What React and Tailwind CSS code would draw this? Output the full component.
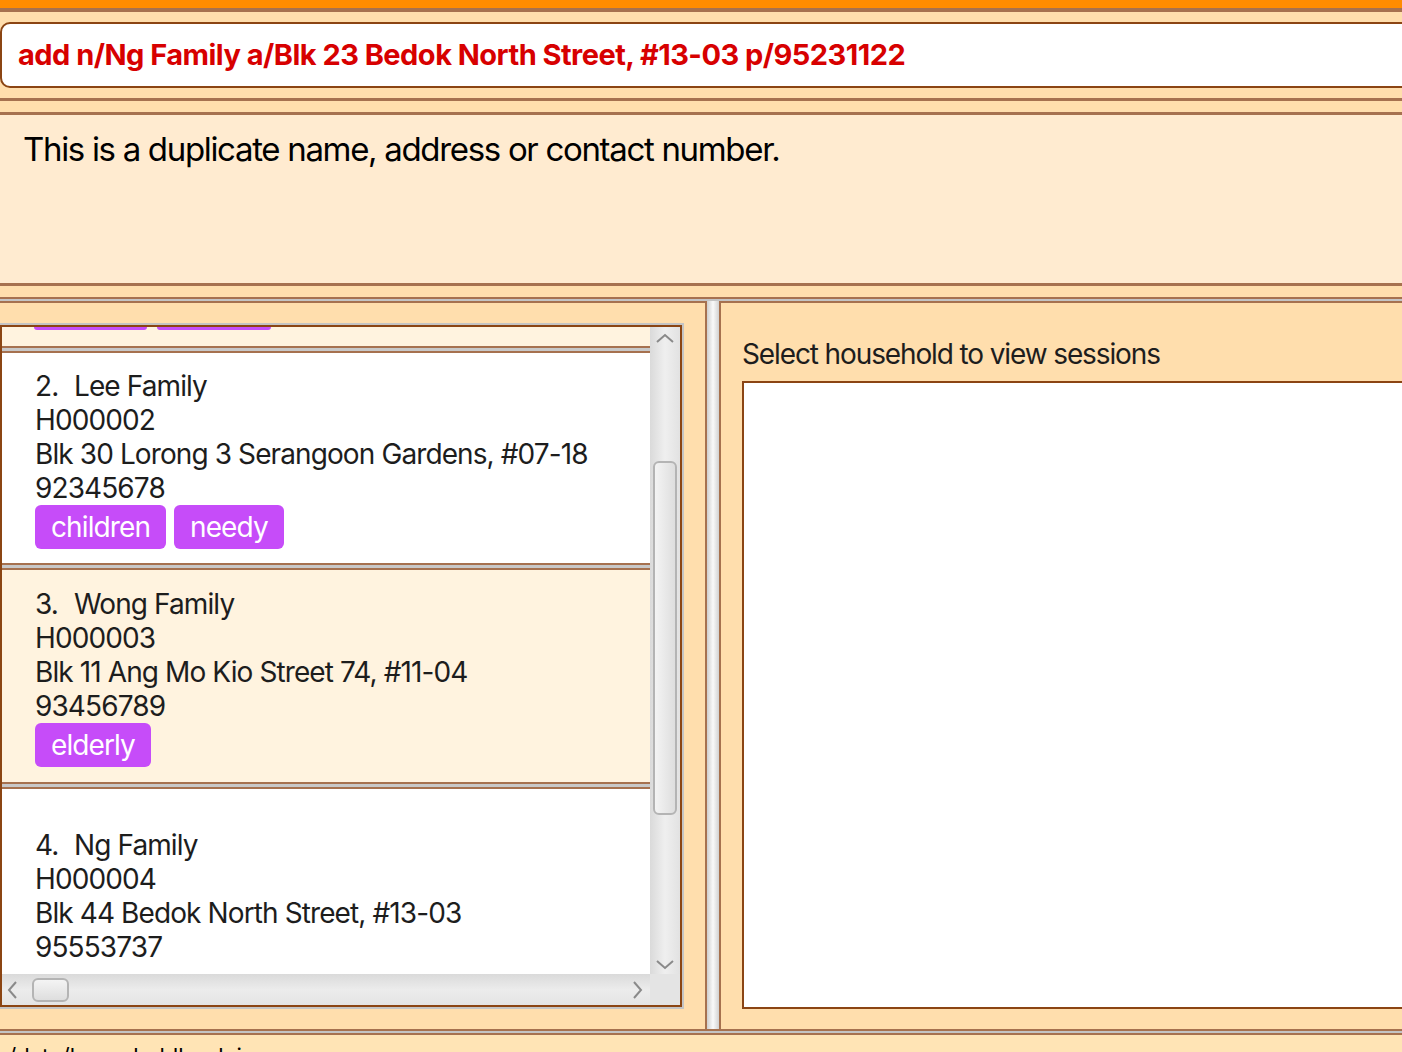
const households = [
  {
    no: 2,
    name: 'Lee Family',
    id: 'H000002',
    address: 'Blk 30 Lorong 3 Serangoon Gardens, #07-18',
    phone: '92345678',
    tags: ['children', 'needy'],
    bg: 'bg-white',
    box: 'h-[210px] pt-[16px]',
  },
  {
    no: 3,
    name: 'Wong Family',
    id: 'H000003',
    address: 'Blk 11 Ang Mo Kio Street 74, #11-04',
    phone: '93456789',
    tags: ['elderly'],
    bg: 'bg-[#fff3df]',
    box: 'h-[212px] pt-[17px]',
  },
  {
    no: 4,
    name: 'Ng Family',
    id: 'H000004',
    address: 'Blk 44 Bedok North Street, #13-03',
    phone: '95553737',
    tags: [],
    bg: 'bg-white',
    box: 'h-[214px] pt-[39px]',
  },
]

// scrollbar arrow, drawn pointing up then rotated
function Arrow({ rotate = '' }) {
  return (
    <svg width="20" height="12" viewBox="0 0 20 12" className={`shrink-0 ${rotate}`}>
      <polyline points="2,10 10,3 18,10" fill="none" stroke="#8a8a8a" strokeWidth="2" />
    </svg>
  )
}

function Separator() {
  return (
    <div className="shrink-0">
      <div className="h-[2px] bg-[#a6714f]" />
      <div className="h-[3px] bg-[#c8c8c8]" />
      <div className="h-[2px] bg-[#a6714f]" />
    </div>
  )
}

function HouseholdCard({ h }) {
  return (
    <div className={`${h.bg} ${h.box} shrink-0 flex flex-col pl-[33px] text-[28px] leading-[34px] tracking-[-0.032em] text-[#1d1d1d]`}>
      <div className="flex">
        <span className="w-[39px]">{h.no}.</span>
        <span>{h.name}</span>
      </div>
      <div>{h.id}</div>
      <div>{h.address}</div>
      <div>{h.phone}</div>
      {h.tags.length > 0 && (
        <div className="flex gap-2">
          {h.tags.map((t) => (
            <span key={t} className="h-[44px] px-4 flex items-center rounded-md bg-[#c64cf9] text-white">
              {t}
            </span>
          ))}
        </div>
      )}
    </div>
  )
}

export default function App() {
  return (
    <div className="w-[1402px] h-[1052px] overflow-hidden flex flex-col bg-[#ffdead] font-[Inter,'Noto_Sans',sans-serif]">
      {/* title strip */}
      <div className="h-[8px] bg-[#ff8c00] shrink-0" />
      <div className="h-[4px] bg-[#a6714f] shrink-0" />

      {/* command box */}
      <div className="pt-[10px] pb-[10px] shrink-0">
        <div className="w-[1440px] h-[66px] rounded-[10px] border-2 border-[#8b4513] bg-white flex items-center pl-[16px]">
          <span className="text-[29px] font-bold tracking-[-0.018em] text-[#d70000]">
            add n/Ng Family a/Blk 23 Bedok North Street, #13-03 p/95231122
          </span>
        </div>
      </div>
      <div className="h-[3px] bg-[#a6714f] shrink-0" />
      <div className="h-[11px] shrink-0" />
      <div className="h-[3px] bg-[#a6714f] shrink-0" />

      {/* result display */}
      <div className="h-[168px] bg-[#ffebd0] shrink-0 pl-[23px] pt-[10px]">
        <p className="text-[33px] tracking-[-0.04em] text-black">
          This is a duplicate name, address or contact number.
        </p>
      </div>
      <div className="h-[3px] bg-[#a6714f] shrink-0" />
      <div className="h-[11px] shrink-0" />
      <div className="h-[2px] bg-[#a6714f] shrink-0" />
      <div className="h-[2px] bg-[#c4c4c4] shrink-0" />

      {/* main split */}
      <div className="h-[730px] shrink-0 flex border-b-2 border-[#a6714f]">
        {/* left: household list */}
        <div className="w-[705px] shrink-0 border-t-2 border-[#a6714f] pt-[20px] pr-[21px]">
          <div className="h-[686px] border-t-2 border-r-2 border-b-2 border-[#c4c4c4]">
            <div className="h-full border-2 border-[#8b4513] flex flex-col">
              <div className="flex flex-1 min-h-0">
                <div className="flex-1 overflow-hidden flex flex-col">
                  {/* tail of card 1, scrolled */}
                  <div className="h-[19px] bg-[#fff3df] shrink-0 flex gap-[10px] pl-[32px]">
                    <div className="w-[113px] h-[3px] rounded-b-md bg-[#c64cf9]" />
                    <div className="w-[114px] h-[3px] rounded-b-md bg-[#c64cf9]" />
                  </div>
                  {households.map((h) => (
                    <div key={h.no} className="flex flex-col shrink-0">
                      <Separator />
                      <HouseholdCard h={h} />
                    </div>
                  ))}
                </div>
                {/* vertical scrollbar */}
                <div className="w-[30px] shrink-0 bg-gradient-to-r from-[#dadada] via-[#efefef] to-[#e2e2e2] flex flex-col items-center">
                  <div className="h-[22px] flex items-center">
                    <Arrow />
                  </div>
                  <div className="h-[112px]" />
                  <div className="w-[24px] h-[354px] rounded-[6px] border-2 border-[#b4b4b4] bg-gradient-to-r from-[#f4f4f4] to-[#dedede]" />
                  <div className="flex-1" />
                  <div className="h-[18px] flex items-center">
                    <Arrow rotate="rotate-180" />
                  </div>
                </div>
              </div>
              {/* horizontal scrollbar */}
              <div className="h-[31px] shrink-0 flex">
                <div className="flex-1 bg-gradient-to-b from-[#dadada] via-[#ececec] to-[#e4e4e4] flex items-center">
                  <div className="w-[20px] flex justify-center">
                    <Arrow rotate="-rotate-90" />
                  </div>
                  <div className="w-[37px] h-[24px] ml-[10px] rounded-[6px] border-2 border-[#b4b4b4] bg-gradient-to-b from-[#f4f4f4] to-[#dedede]" />
                  <div className="flex-1" />
                  <div className="w-[20px] mr-[2px] flex justify-center">
                    <Arrow rotate="rotate-90" />
                  </div>
                </div>
                <div className="w-[30px] bg-[#e4e4e4]" />
              </div>
            </div>
          </div>
        </div>

        {/* splitter */}
        <div className="w-[2px] bg-[#a6714f] shrink-0" />
        <div className="w-[12px] shrink-0 bg-gradient-to-r from-[#cfcfcf] via-[#fafafa] to-[#d2d2d2]" />
        <div className="w-[2px] bg-[#a6714f] shrink-0" />

        {/* right: sessions */}
        <div className="flex-1 border-t-2 border-[#a6714f] pl-[21px] flex flex-col">
          <div className="h-[78px] flex items-end pb-[6px]">
            <span className="text-[28px] tracking-[-0.04em] text-[#1d1d1d]">Select household to view sessions</span>
          </div>
          <div className="w-[700px] h-[628px] border-2 border-[#8b4513] bg-white" />
        </div>
      </div>
      <div className="h-[2px] bg-[#c4c4c4] shrink-0" />
      <div className="h-[2px] bg-[#a6714f] shrink-0" />

      {/* status bar */}
      <div className="flex-1 bg-[#ffe4b5] pl-[2px] pt-[10px]">
        <span className="text-[22px] leading-none text-black">./data/householdbook.json</span>
      </div>
    </div>
  )
}
